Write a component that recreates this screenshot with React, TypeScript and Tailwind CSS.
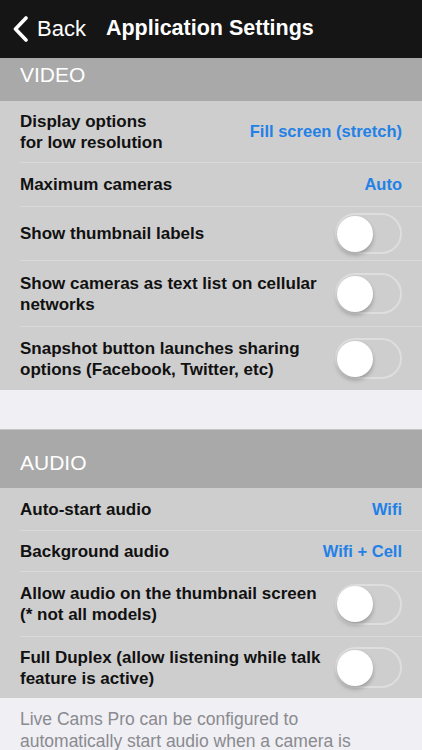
const font = { fontFamily: '"Liberation Sans", Arial, sans-serif' };

type Row = {
  label: string[];
  value?: string;
  toggle?: boolean;
  h: string;
};

const videoRows: Row[] = [
  { label: ['Display options', 'for low resolution'], value: 'Fill screen (stretch)', h: 'h-[62px]' },
  { label: ['Maximum cameras'], value: 'Auto', h: 'h-[44px]' },
  { label: ['Show thumbnail labels'], toggle: true, h: 'h-[54px]' },
  { label: ['Show cameras as text list on cellular', 'networks'], toggle: true, h: 'h-[66px]' },
  { label: ['Snapshot button launches sharing', 'options (Facebook, Twitter, etc)'], toggle: true, h: 'h-[63px]' },
];

const audioRows: Row[] = [
  { label: ['Auto-start audio'], value: 'Wifi', h: 'h-[43px]' },
  { label: ['Background audio'], value: 'Wifi + Cell', h: 'h-[41px]' },
  { label: ['Allow audio on the thumbnail screen', '(* not all models)'], toggle: true, h: 'h-[65px]' },
  { label: ['Full Duplex (allow listening while talk', 'feature is active)'], toggle: true, h: 'h-[61px]' },
];

function Switch() {
  return (
    <div className="relative h-[41px] w-[67px] shrink-0 rounded-full border-2 border-[#dedede]">
      <div className="absolute left-0 top-[0.5px] h-[36px] w-[36px] rounded-full bg-white shadow-[0_3px_4px_rgba(0,0,0,0.25)]" />
    </div>
  );
}

function SettingsRow({ row, last }: { row: Row; last: boolean }) {
  return (
    <div className={`${row.h} pl-5`}>
      <div
        className={`flex h-full items-center justify-between pr-5 ${last ? '' : 'border-b border-[#d9d9d9]'}`}
      >
        <div className="text-[17px] font-bold leading-[21px] text-[#111]">
          {row.label.map((l) => (
            <div key={l} className="whitespace-nowrap">
              {l}
            </div>
          ))}
        </div>
        {row.value && (
          <span className="whitespace-nowrap text-[16.5px] font-bold text-[#2381e6]">{row.value}</span>
        )}
        {row.toggle && <Switch />}
      </div>
    </div>
  );
}

export default function App() {
  return (
    <div className="h-[750px] w-[422px] overflow-hidden bg-[#efeff4]" style={font}>
      <header className="flex h-[58px] items-center bg-[#151515] text-white">
        <div className="flex items-center pl-3">
          <svg width="17" height="26" viewBox="0 0 17 26" fill="none" aria-hidden="true">
            <path d="M14 2 L3.5 13 L14 24" stroke="white" strokeWidth="3.6" strokeLinecap="round" strokeLinejoin="round" />
          </svg>
          <span className="ml-[8px] text-[22px] leading-none">Back</span>
        </div>
        <h1 className="ml-[20px] text-[21.5px] font-bold leading-none">Application Settings</h1>
      </header>

      <div className="flex h-[43px] items-end bg-[#a9a9a9] pb-[14px] pl-5">
        <span className="text-[21px] leading-[24px] text-white">VIDEO</span>
      </div>
      <div className="bg-[#cecece]">
        {videoRows.map((r, i) => (
          <SettingsRow key={r.label[0]} row={r} last={i === videoRows.length - 1} />
        ))}
      </div>

      <div className="h-[39px]" />

      <div className="flex h-[59px] items-end border-t border-[#c6c6c6] bg-[#a9a9a9] pb-[13px] pl-5">
        <span className="text-[21px] leading-[24px] text-white">AUDIO</span>
      </div>
      <div className="bg-[#cecece]">
        {audioRows.map((r, i) => (
          <SettingsRow key={r.label[0]} row={r} last={i === audioRows.length - 1} />
        ))}
      </div>

      <p className="pl-5 pt-[10px] text-[17.5px] leading-[22px] text-[#8a8a8f]">
        <span className="block whitespace-nowrap">Live Cams Pro can be configured to</span>
        <span className="block whitespace-nowrap">automatically start audio when a camera is</span>
      </p>
    </div>
  );
}
